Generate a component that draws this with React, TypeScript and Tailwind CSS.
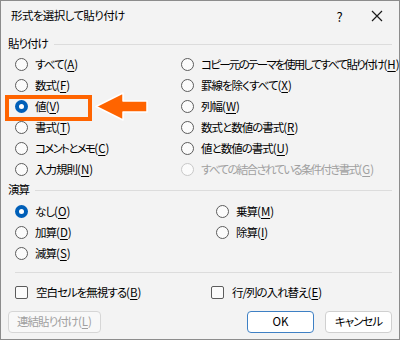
import React from 'react';

const font = { fontFamily: '"Noto Sans CJK JP", "Noto Sans", sans-serif' };

function Key({ k }: { k: string }) {
  return (
    <span className="tracking-[0px]">
      (<span className="underline underline-offset-2">{k}</span>)
    </span>
  );
}

function Radio({ checked, disabled }: { checked?: boolean; disabled?: boolean }) {
  if (checked) {
    return (
      <span className="w-[13px] h-[13px] shrink-0 rounded-full bg-[#005fb8] flex items-center justify-center">
        <span className="w-[5px] h-[5px] rounded-full bg-white" />
      </span>
    );
  }
  return (
    <span
      className={`w-[13px] h-[13px] shrink-0 rounded-full border bg-[#fbfbfb] ${
        disabled ? 'border-[#c8c8c8]' : 'border-[#5c5c5c]'
      }`}
    />
  );
}

function Opt({
  label,
  k,
  checked,
  disabled,
  tight,
}: {
  label: string;
  k: string;
  checked?: boolean;
  disabled?: boolean;
  tight?: boolean;
}) {
  return (
    <div className={`flex items-center gap-[7px] h-[21px] whitespace-nowrap ${disabled ? 'text-[#a0a0a0]' : 'text-black'}`}>
      <Radio checked={checked} disabled={disabled} />
      <span>
        <span className={tight ? 'tracking-[-1.7px]' : ''}>{label}</span>
        <Key k={k} />
      </span>
    </div>
  );
}

function Check({ label, k }: { label: string; k: string }) {
  return (
    <div className="flex items-center gap-[8px] whitespace-nowrap">
      <span className="w-[13px] h-[13px] rounded-[2px] border border-[#5c5c5c] bg-[#fbfbfb]" />
      <span>
        {label}
        <Key k={k} />
      </span>
    </div>
  );
}

export default function App() {
  return (
    <div
      className="w-[400px] h-[340px] bg-[#f3f3f3] border border-[#8c8c8c] text-[11.5px] tracking-[-1px] leading-none relative overflow-hidden [font-feature-settings:'palt']"
      style={font}
    >
      {/* title bar */}
      <div className="h-[30px] flex items-center pl-[10px] pr-[14px]">
        <span className="flex-1 tracking-[-0.6px]">形式を選択して貼り付け</span>
        <span className="w-[20px] text-center text-[13px] mr-[22px]">?</span>
        <svg width="12" height="12" viewBox="0 0 12 12" className="mr-[2px]">
          <path d="M1 1L11 11M11 1L1 11" stroke="#1a1a1a" strokeWidth="1.2" />
        </svg>
      </div>

      <div className="px-[7px]">
        {/* paste section */}
        <div className="flex items-center gap-[6px] h-[20px] mt-[3px]">
          <span>貼り付け</span>
          <span className="flex-1 h-px bg-[#dcdcdc]" />
        </div>
        <div className="grid grid-cols-[166px_1fr] pl-[7px]">
          <div className="flex flex-col">
            <Opt label="すべて" k="A" />
            <Opt label="数式" k="F" />
            <Opt label="値" k="V" checked />
            <Opt label="書式" k="T" />
            <Opt label="コメントとメモ" k="C" tight />
            <Opt label="入力規則" k="N" />
          </div>
          <div className="flex flex-col">
            <Opt label="コピー元のテーマを使用してすべて貼り付け" k="H" tight />
            <Opt label="罫線を除くすべて" k="X" />
            <Opt label="列幅" k="W" />
            <Opt label="数式と数値の書式" k="R" />
            <Opt label="値と数値の書式" k="U" />
            <Opt label="すべての結合されている条件付き書式" k="G" disabled tight />
          </div>
        </div>

        {/* operation section */}
        <div className="flex items-center gap-[6px] h-[20px]">
          <span>演算</span>
          <span className="flex-1 h-px bg-[#dcdcdc]" />
        </div>
        <div className="grid grid-cols-[201px_1fr] pl-[7px] mt-[1px]">
          <div className="flex flex-col">
            <Opt label="なし" k="O" checked />
            <Opt label="加算" k="D" />
            <Opt label="減算" k="S" />
          </div>
          <div className="flex flex-col">
            <Opt label="乗算" k="M" />
            <Opt label="除算" k="I" />
          </div>
        </div>

        <div className="h-px bg-[#dcdcdc] ml-[7px] mt-[8px]" />

        <div className="grid grid-cols-[196px_1fr] pl-[7px] mt-[13px]">
          <Check label="空白セルを無視する" k="B" />
          <Check label="行/列の入れ替え" k="E" />
        </div>

        <div className="flex items-center mt-[12px]">
          <div className="w-[93px] h-[22px] rounded-[4px] border border-[#d6d6d6] bg-[#f8f8f8] text-[#a0a0a0] flex items-center justify-center">
            連結貼り付け<Key k="L" />
          </div>
          <div className="flex-1" />
          <div className="w-[67px] h-[22px] rounded-[4px] border border-[#3e80c4] bg-white flex items-center justify-center mr-[11px] tracking-normal">
            OK
          </div>
          <div className="w-[67px] h-[22px] rounded-[4px] border border-[#d0d0d0] bg-white flex items-center justify-center">
            キャンセル
          </div>
        </div>
      </div>

      {/* highlight overlay */}
      <div className="absolute left-[4px] top-[94px] w-[87px] h-[26px] border-[4px] border-[#ff6400]" />
      <svg className="absolute left-[93px] top-[90px]" width="56" height="31" viewBox="0 0 56 31">
        <path d="M2 15.5 L29 2 L29 10 L53 10 L53 21 L29 21 L29 29 Z" fill="#ff6400" stroke="#ffffff" strokeWidth="1.5" strokeLinejoin="round" />
      </svg>
    </div>
  );
}
